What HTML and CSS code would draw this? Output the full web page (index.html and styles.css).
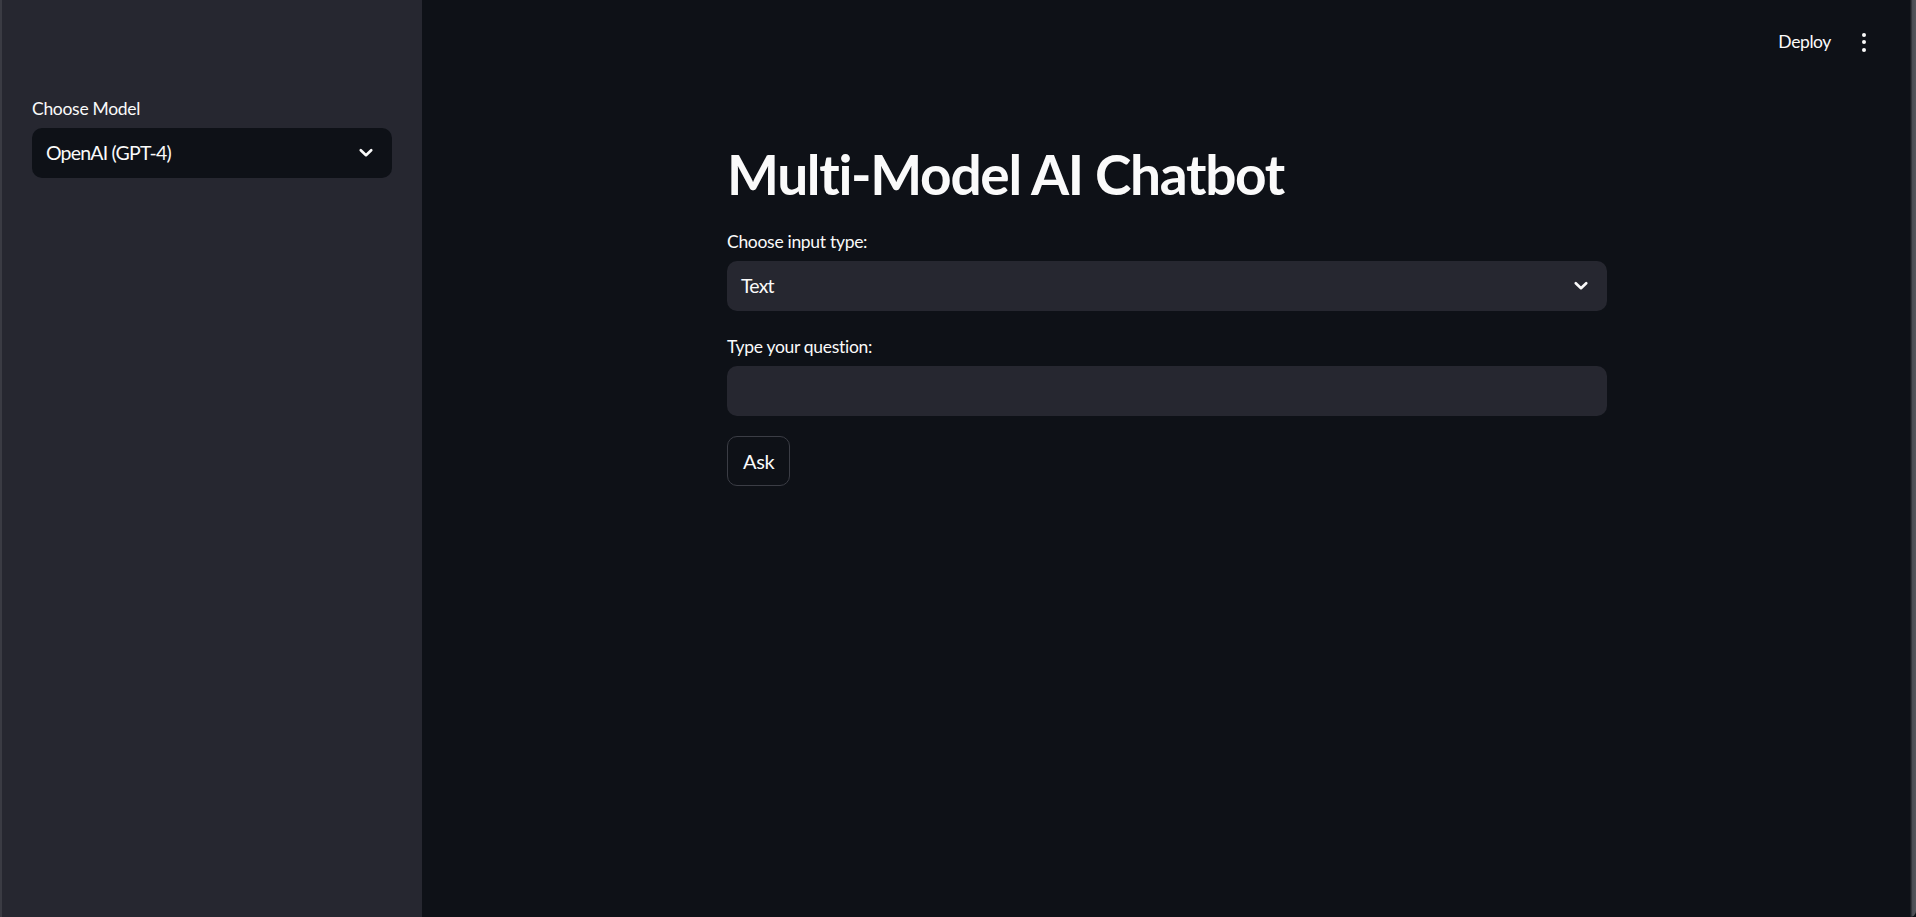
FILE: index.html
```html
<!DOCTYPE html>
<html lang="en">
<head>
<meta charset="utf-8">
<title>Multi-Model AI Chatbot</title>
<link rel="stylesheet" href="styles.css">
</head>
<body>
<div class="app">
  <aside class="sidebar">
    <div class="field">
      <div class="label">Choose Model</div>
      <div class="select select-dark">
        <span class="value">OpenAI (GPT-4)</span>
        <svg class="chev" width="14" height="10" viewBox="0 0 14 10"><path d="M1.8 2.2 L7 7.2 L12.2 2.2" fill="none" stroke="#fafafa" stroke-width="2.6" stroke-linecap="round" stroke-linejoin="round"/></svg>
      </div>
    </div>
  </aside>
  <main class="main">
    <header class="header">
      <span class="deploy">Deploy</span>
      <span class="kebab"><i></i><i></i><i></i></span>
    </header>
    <section class="block">
      <h1 class="title">Multi-Model AI Chatbot</h1>
      <div class="field">
        <div class="label">Choose input type:</div>
        <div class="select">
          <span class="value">Text</span>
          <svg class="chev" width="14" height="10" viewBox="0 0 14 10"><path d="M1.8 2.2 L7 7.2 L12.2 2.2" fill="none" stroke="#fafafa" stroke-width="2.6" stroke-linecap="round" stroke-linejoin="round"/></svg>
        </div>
      </div>
      <div class="field">
        <div class="label">Type your question:</div>
        <div class="input"></div>
      </div>
      <button class="btn">Ask</button>
    </section>
  </main>
  <div class="frame-right"></div>
</div>
</body>
</html>
```

FILE: styles.css
```css
* { box-sizing: border-box; }
html, body {
  margin: 0;
  padding: 0;
  height: 100%;
  background: #0e1117;
  color: #fafafa;
  font-family: "Lato", "Noto Sans", sans-serif;
}
.app {
  display: flex;
  height: 917px;
  overflow: hidden;
}
.sidebar {
  width: 422px;
  flex: 0 0 422px;
  background: #262730;
  border-left: 2px solid #3a3b43;
  padding: 95px 30px 0 30px;
}
.main {
  flex: 1;
  display: flex;
  flex-direction: column;
  background: #0e1117;
  padding-left: 2px;
}
.frame-right {
  flex: 0 0 6px;
  background: linear-gradient(90deg, #1c1e24 0, #1c1e24 1px, #4a4b52 2px, #55565c 6px);
  border-bottom-right-radius: 8px;
}
.header {
  height: 84px;
  display: flex;
  align-items: center;
  justify-content: flex-end;
  padding-right: 44px;
  gap: 31px;
}
.deploy {
  font-size: 17.5px;
  line-height: 28px;
  letter-spacing: -0.4px;
  color: #fafafa;
}
.kebab {
  display: flex;
  flex-direction: column;
  gap: 3.5px;
  width: 4px;
}
.kebab i {
  display: block;
  width: 4px;
  height: 4px;
  border-radius: 50%;
  background: #fafafa;
}
.block {
  width: 880px;
  margin: 0 auto;
  padding-top: 57px;
  display: flex;
  flex-direction: column;
  align-items: flex-start;
}
.title {
  margin: 0 0 21px 0;
  font-size: 55px;
  line-height: 66px;
  font-weight: 700;
  letter-spacing: -1.3px;
  color: #fafafa;
}
.field {
  width: 100%;
  margin-bottom: 22px;
}
.sidebar .field { margin-bottom: 0; }
.label {
  font-size: 17.5px;
  line-height: 28px;
  letter-spacing: -0.3px;
  margin-bottom: 5px;
  color: #fafafa;
}
.select {
  height: 50px;
  border-radius: 10px;
  background: #262730;
  display: flex;
  align-items: center;
  justify-content: space-between;
  padding: 0 19px 0 14px;
}
.select-dark { background: #0e1117; }
.value {
  font-size: 19.5px;
  line-height: 28px;
  letter-spacing: -0.8px;
  color: #fafafa;
}
.chev { display: block; }
.input {
  height: 50px;
  border-radius: 10px;
  background: #262730;
}
.btn {
  margin-top: -2px;
  height: 50px;
  padding: 0 15px;
  border: 1px solid #3b3d45;
  border-radius: 10px;
  background: #0e1117;
  color: #fafafa;
  font-family: "Lato", "Noto Sans", sans-serif;
  font-size: 20px;
  letter-spacing: -0.3px;
}
```
